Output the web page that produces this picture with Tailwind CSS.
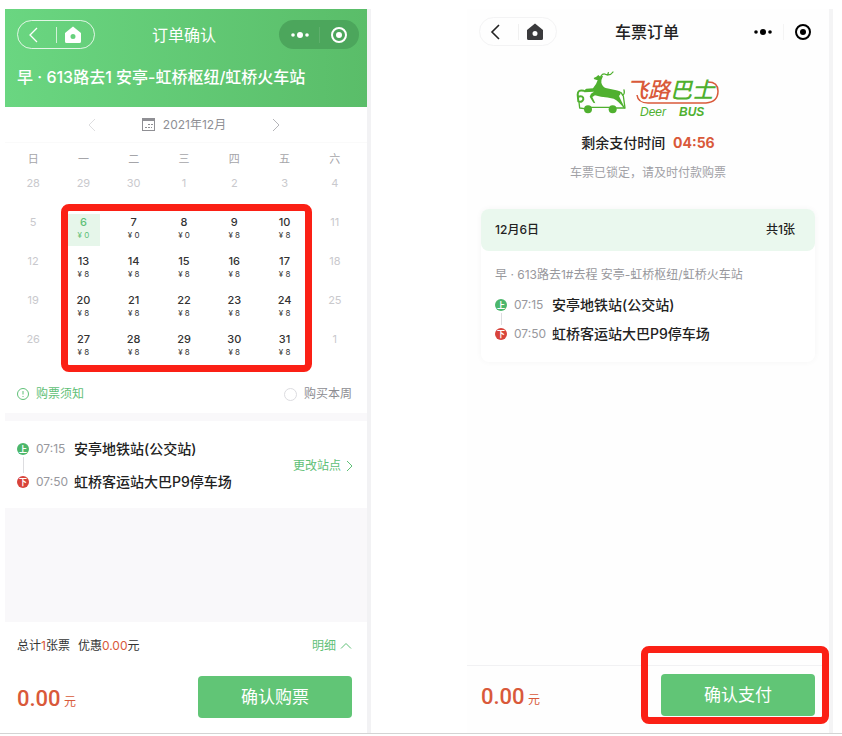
<!DOCTYPE html>
<html lang="zh-CN">
<head>
    <meta charset="UTF-8">
    <meta name="viewport" content="width=device-width, initial-scale=1.0">
    <title>订单确认</title>
    <script src="https://cdn.jsdelivr.net/npm/@tailwindcss/browser@4"></script>
</head>
<body class="min-h-screen flex flex-col pb-0.5 bg-white text-[#333] text-xs font-['Inter','Noto_Sans_CJK_SC',sans-serif]">
    <main class="flex-1 flex gap-24 pt-[9px] pl-[5px] pr-[9px] border-b border-[#d4d4d4]">

        <!-- order confirm -->
        <section class="flex-1 flex flex-col bg-[#f9f8fa] border-r-4 border-[#f2f2f4]">
            <header class="h-[98px] px-3 pt-[11px] bg-linear-to-r from-[#6ad681] to-[#5abd69] text-white">
                <div class="flex items-center -mr-1">
                    <div class="w-[78px] h-[29px] flex items-center rounded-full border border-white/80">
                        <button aria-label="返回" class="flex-1 flex justify-center pr-1">
                            <svg class="w-4 h-4" viewBox="0 0 16 16" fill="none" stroke="currentColor" stroke-width="1.3"><path d="M10 1 L3 8 L10 15"/></svg>
                        </button>
                        <span class="w-px h-4 bg-white/70"></span>
                        <button aria-label="首页" class="flex-1 flex justify-center pr-1">
                            <svg class="w-[18px] h-[18px]" viewBox="0 0 18 18" fill="currentColor" fill-rule="evenodd"><path d="M9 .5 L17 7 V15.5 Q17 17 15.5 17 H2.5 Q1 17 1 15.5 V7 Z M9 8 A2.5 2.5 0 1 0 9 13 A2.5 2.5 0 1 0 9 8 Z"/></svg>
                        </button>
                    </div>
                    <h1 class="flex-1 pr-1.5 text-center text-base">订单确认</h1>
                    <div class="w-20 h-[29px] flex items-center rounded-full bg-[#4ca65c]">
                        <button aria-label="更多" class="flex-1 flex justify-center">
                            <svg class="w-5 h-4" viewBox="0 0 20 16" fill="currentColor"><circle cx="4" cy="8" r="1.8"/><circle cx="11" cy="8" r="3"/><circle cx="18" cy="8" r="1.8"/></svg>
                        </button>
                        <span class="w-px h-4 bg-white/10"></span>
                        <button aria-label="关闭" class="flex-1 flex justify-center">
                            <svg class="w-[18px] h-[18px]" viewBox="0 0 18 18"><circle cx="9" cy="9" r="7" fill="none" stroke="currentColor" stroke-width="2"/><circle cx="9" cy="9" r="3" fill="currentColor"/></svg>
                        </button>
                    </div>
                </div>
                <h2 class="mt-4 text-base leading-6 font-medium whitespace-nowrap">早 · 613路去1 安亭-虹桥枢纽/虹桥火车站</h2>
            </header>

            <div class="h-[306px] bg-white">
                <div class="h-9 pr-1 flex items-center justify-center gap-11 border-b border-[#fafafa] text-[#8f8f94]">
                    <button aria-label="上个月" class="text-[#dedee0]">
                        <svg class="w-3 h-3" viewBox="0 0 12 12" fill="none" stroke="currentColor"><path d="M9 0 L3 6 L9 12"/></svg>
                    </button>
                    <div class="flex items-center gap-2">
                        <svg class="w-[13px] h-[13px]" viewBox="0 0 13 13" fill="none" stroke="currentColor"><rect x=".5" y=".5" width="12" height="12"/><path d="M0 2 H13" stroke-width="2"/><path d="M3 9.5 H5 M6 9.5 H8 M9 9.5 H10 M6 6.5 H8 M9 6.5 H11"/></svg>
                        2021年12月
                    </div>
                    <button aria-label="下个月" class="text-[#b5b5b9]">
                        <svg class="w-3 h-3" viewBox="0 0 12 12" fill="none" stroke="currentColor"><path d="M3 0 L9 6 L3 12"/></svg>
                    </button>
                </div>

                <div class="relative pl-[3px] pr-[7px]">
                    <table class="w-full table-fixed text-center text-[11px] text-[#c9c9cd]">
                        <thead>
                            <tr class="h-8 text-[#a5a5a9]">
                                <th class="font-normal">日</th><th class="font-normal">一</th><th class="font-normal">二</th><th class="font-normal">三</th><th class="font-normal">四</th><th class="font-normal">五</th><th class="font-normal">六</th>
                            </tr>
                        </thead>
                        <tbody id="days"></tbody>
                    </table>
                    <div class="absolute top-[61px] left-14 right-[55px] h-[168px] border-7 border-[#fb2015] rounded-lg pointer-events-none"></div>
                </div>

                <div class="mt-1 pl-3 pr-[15px] h-10 flex items-center justify-between">
                    <a href="#" class="flex items-center gap-[7px] text-[#5fc077]">
                        <svg class="w-3 h-3" viewBox="0 0 12 12" fill="none" stroke="currentColor"><circle cx="6" cy="6" r="5.5"/><path d="M6 3 V6.5 M6 8 V9"/></svg>
                        购票须知
                    </a>
                    <label class="flex items-center gap-[7px] text-[#8d8d92]">
                        <input type="radio" name="week" class="appearance-none w-[13px] h-[13px] rounded-full border border-[#dcdce0]">
                        购买本周
                    </label>
                </div>
            </div>

            <div class="mt-2 h-[87px] pt-0.5 pl-3 pr-3.5 flex items-center justify-between bg-white">
                <ul class="flex flex-col gap-[9px]">
                    <li class="relative flex items-center h-6 text-[#98989d]">
                        <span class="w-3 h-3 rounded-full bg-[#4cb76c] text-white text-[8px] leading-3 text-center font-bold">上</span>
                        <span class="absolute left-1.5 top-5 h-4 w-px bg-[#dddde0]"></span>
                        <time class="w-[38px] ml-[7px]">07:15</time>
                        <span class="text-sm font-medium text-[#222]">安亭地铁站(公交站)</span>
                    </li>
                    <li class="flex items-center h-6 text-[#98989d]">
                        <span class="w-3 h-3 rounded-full bg-[#d8433b] text-white text-[8px] leading-3 text-center font-bold">下</span>
                        <time class="w-[38px] ml-[7px]">07:50</time>
                        <span class="text-sm font-medium text-[#222]">虹桥客运站大巴P9停车场</span>
                    </li>
                </ul>
                <a href="#" class="flex items-center gap-1 text-[#5fc077]">
                    更改站点
                    <svg class="w-2 h-3" viewBox="0 0 8 12" fill="none" stroke="currentColor"><path d="M2 1 L7 6 L2 11"/></svg>
                </a>
            </div>

            <footer class="mt-auto h-[111px] pl-3 pr-[15px] bg-white">
                <div class="h-12 flex items-center justify-between">
                    <p class="flex gap-2"><span>总计<b class="font-normal text-[#d9593a]">1</b>张票</span><span>优惠<b class="font-normal text-[#d9593a]">0.00</b>元</span></p>
                    <button class="flex items-center gap-1 text-[#5fc077]">
                        明细
                        <svg class="w-3 h-2" viewBox="0 0 12 8" fill="none" stroke="currentColor"><path d="M1 6.5 L6 1.5 L11 6.5"/></svg>
                    </button>
                </div>
                <div class="mt-1.5 flex items-center justify-between text-[#d9593a]">
                    <p class="pt-1"><span class="text-[22px] font-['Roboto'] font-medium">0.00</span> 元</p>
                    <button class="w-[154px] h-[42px] rounded-sm bg-[#61c576] text-white text-[17px]">确认购票</button>
                </div>
            </footer>
        </section>

        <!-- payment -->
        <section class="flex-1 flex flex-col bg-[#fefefe] border-r-4 border-[#f4f4f5]">
            <header class="pt-2 pl-3 pr-1.5 flex items-center text-[#222]">
                <div class="w-[78px] h-[29px] flex items-center rounded-full border border-[#f3f3f4]">
                    <button aria-label="返回" class="flex-1 flex justify-center pr-1">
                        <svg class="w-4 h-4" viewBox="0 0 16 16" fill="none" stroke="currentColor" stroke-width="1.6"><path d="M10 1 L3 8 L10 15"/></svg>
                    </button>
                    <span class="w-px h-4 bg-[#f0f0f0]"></span>
                    <button aria-label="首页" class="flex-1 flex justify-center pr-1 text-[#3a3a3c]">
                        <svg class="w-[18px] h-[18px]" viewBox="0 0 18 18" fill="currentColor" fill-rule="evenodd"><path d="M9 .5 L17 7 V15.5 Q17 17 15.5 17 H2.5 Q1 17 1 15.5 V7 Z M9 8 A2.5 2.5 0 1 0 9 13 A2.5 2.5 0 1 0 9 8 Z"/></svg>
                    </button>
                </div>
                <h1 class="flex-1 pr-1.5 text-center text-base font-medium">车票订单</h1>
                <div class="w-20 h-[29px] flex items-center rounded-full text-black">
                    <button aria-label="更多" class="flex-1 flex justify-center">
                        <svg class="w-5 h-4" viewBox="0 0 20 16" fill="currentColor"><circle cx="3" cy="8" r="1.8"/><circle cx="10" cy="8" r="3"/><circle cx="17" cy="8" r="1.8"/></svg>
                    </button>
                    <span class="w-px h-4 bg-[#f4f4f4]"></span>
                    <button aria-label="关闭" class="flex-1 flex justify-center">
                        <svg class="w-[18px] h-[18px]" viewBox="0 0 18 18"><circle cx="9" cy="9" r="7" fill="none" stroke="currentColor" stroke-width="2"/><circle cx="9" cy="9" r="3" fill="currentColor"/></svg>
                    </button>
                </div>
            </header>

            <div class="mt-6 flex flex-col items-center">
                <svg class="w-36 h-12" viewBox="0 0 144 48" role="img" aria-label="飞路巴士 Deer BUS">
                    <!-- deer on wheels -->
                    <g transform="translate(-3 -2) scale(.3333)">
                        <g fill="#4fb02f">
                            <path d="M62 30 L70 26 L76 21 L80 25 L90 24 Q84 36 85 44 Q88 56 98 60 L130 67 Q144 69 142 79 L138 84 Q145 100 157 122 L152 120 Q138 100 122 92 Q104 88 84 86 L66 82 L58 87 L67 106 L61 104 L50 86 L54 77 L63 71 L34 73 L32 68 L40 62 L60 61 Q70 50 74 37 L64 34 Z"/>
                            <circle cx="45" cy="124" r="12"/>
                            <circle cx="119" cy="124" r="12"/>
                        </g>
                        <g fill="none" stroke="#4fb02f" stroke-linecap="round" stroke-linejoin="round">
                            <path stroke-width="4" d="M84 24 Q90 15 98 19 Q112 24 120 12 M104 21 L106 14"/>
                            <path stroke-width="6" d="M32 68 Q14 64 14 80 L16 100 Q28 104 31 94 Q32 82 16 86"/>
                            <path stroke-width="4" d="M18 102 L20 120 L34 122 M54 118 H108 M130 120 L156 120 L151 84 M139 72 Q147 74 149 82 Q156 78 153 66"/>
                        </g>
                    </g>
                    <path d="M61 25 Q62 33 72 33 H130 Q142 32 142 21 Q142 12 132 12" fill="none" stroke="#d9593a" stroke-width="1.5"/>
                    <text x="50" y="28" font-size="22" font-style="italic" font-weight="500" font-family="Noto Sans CJK SC" fill="#d9593a">飞路<tspan fill="#4fb02f">巴士</tspan></text>
                    <text x="64" y="46" font-size="12" font-style="italic" font-family="Liberation Sans" fill="#4fb02f">Deer</text>
                    <text x="103" y="46" font-size="12" font-style="italic" font-weight="700" font-family="Liberation Sans" fill="#4fb02f">BUS</text>
                </svg>
                <p class="mt-[15px] text-sm leading-5 font-medium text-[#222]">剩余支付时间 <b class="ml-1 font-bold text-[#d9593a]">04:56</b></p>
                <p class="mt-3 leading-4 text-[#a1a1a6]">车票已锁定，请及时付款购票</p>
            </div>

            <article class="mt-7 mx-3.5 rounded-lg bg-white shadow-[0_0_6px_rgba(0,0,0,0.04)]">
                <div class="h-[42px] pl-3.5 pr-5 flex items-center justify-between rounded-lg bg-[#eaf8ee] font-medium text-[#222]">
                    <span>12月6日</span><span>共1张</span>
                </div>
                <div class="pt-3.5 px-3.5 pb-4">
                    <p class="leading-5 text-[#98989d] whitespace-nowrap">早 · 613路去1#去程 安亭-虹桥枢纽/虹桥火车站</p>
                    <ul class="mt-2 flex flex-col gap-[5px]">
                        <li class="relative flex items-center h-6 text-[#98989d]">
                            <span class="w-3 h-3 rounded-full bg-[#4cb76c] text-white text-[8px] leading-3 text-center font-bold">上</span>
                            <span class="absolute left-1.5 top-5 h-3 w-px bg-[#dddde0]"></span>
                            <time class="w-[38px] ml-[7px]">07:15</time>
                            <span class="text-sm font-medium text-[#222]">安亭地铁站(公交站)</span>
                        </li>
                        <li class="flex items-center h-6 text-[#98989d]">
                            <span class="w-3 h-3 rounded-full bg-[#d8433b] text-white text-[8px] leading-3 text-center font-bold">下</span>
                            <time class="w-[38px] ml-[7px]">07:50</time>
                            <span class="text-sm font-medium text-[#222]">虹桥客运站大巴P9停车场</span>
                        </li>
                    </ul>
                </div>
            </article>

            <footer class="mt-auto h-[68px] pt-2 px-3.5 flex items-start justify-between border-t border-[#f1f1f3] text-[#d9593a]">
                <p class="pt-2"><span class="text-[22px] font-['Roboto'] font-medium">0.00</span> 元</p>
                <div class="relative">
                    <button class="w-[154px] h-[42px] rounded-sm bg-[#61c576] text-white text-[17px]">确认支付</button>
                    <div class="absolute -top-7 -bottom-2 -left-5 -right-3.5 border-7 border-[#fb2015] rounded-lg pointer-events-none"></div>
                </div>
            </footer>
        </section>
    </main>

    <script>
        const days = document.getElementById('days');
        const weeks = [
            [28, 29, 30, 1, 2, 3, 4],
            [5, 6, 7, 8, 9, 10, 11],
            [12, 13, 14, 15, 16, 17, 18],
            [19, 20, 21, 22, 23, 24, 25],
            [26, 27, 28, 29, 30, 31, 1]
        ];

        weeks.forEach((week, w) => {
            const cells = week.map((day, d) => {
                if (w === 0 || d === 0 || d === 6) {
                    return `<td class="align-top leading-4">${day}</td>`;
                }
                const price = w === 1 && d < 4 ? 0 : 8;
                const color = w === 1 && d === 1 ? 'bg-[#e6f6ea] text-[#5fc077]' : 'text-[#333]';
                return `<td class="align-top"><button class="flex flex-col items-center mx-auto w-[33px] h-8 ${color}"><span class="leading-4 font-medium">${day}</span><span class="text-[8px] leading-[10px]">¥ ${price}</span></button></td>`;
            });
            days.innerHTML += `<tr class="h-[39px]">${cells.join('')}</tr>`;
        });
    </script>
</body>
</html>
